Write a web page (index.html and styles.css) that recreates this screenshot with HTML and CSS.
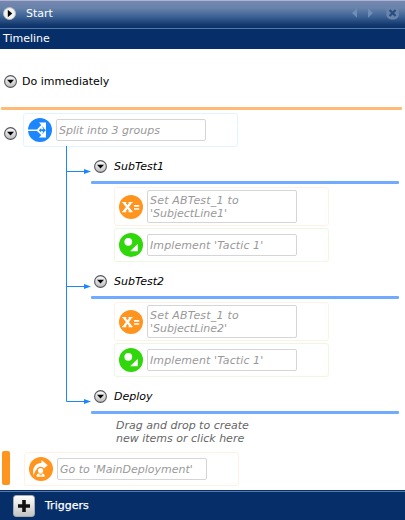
FILE: index.html
```html
<!DOCTYPE html>
<html lang="en">
<head>
<meta charset="utf-8">
<title>Start</title>
<link rel="stylesheet" href="styles.css">
</head>
<body>
<svg class="defs" width="0" height="0">
  <defs>
    <linearGradient id="metal" x1="0" y1="0" x2="0" y2="1"><stop offset="0" stop-color="#fff"/><stop offset="1" stop-color="#bbb"/></linearGradient>
    <symbol id="caret" viewBox="0 0 13 13"><circle cx="6.5" cy="6.5" r="5.9" fill="url(#metal)" stroke="#55555c" stroke-width="1.1"/><path d="M3 4.8h7L6.5 8.6z" fill="#000"/></symbol>
    <symbol id="split" viewBox="0 0 24 24"><circle cx="12" cy="12" r="12" fill="#1c86ff"/><path d="M11 4.5h7v15h-7l2.2-2.4L9 13H0v-1.6h9l4.2-4.3z" fill="#fff"/><path d="M10.8 12.2l2.4-2.3v1.6h1l1.4-1.6 2.3 2.3-2.3 2.3-1.4-1.6h-1v1.6z" fill="#1c86ff"/><path d="M13.8 9.2l.9-.9 1.4 1.4-.6.6zM13.8 15.2l.9.9 1.4-1.4-.6-.6z" fill="#1c86ff" opacity=".6"/></symbol>
    <symbol id="assign" viewBox="0 0 24 24"><circle cx="12" cy="12" r="12" fill="#ff951e"/><path d="M5 7.7l7 8.8M11.7 7.7L5 16.5" stroke="#fff" stroke-width="2.3"/><path d="M3.2 7.5h4M9.6 7.5h4M3.2 16.7h4M9.6 16.7h4" stroke="#fff" stroke-width="1.2"/><path d="M15 10.8h5.2M15 14h5.2" stroke="#fff" stroke-width="1.7"/></symbol>
    <symbol id="tactic" viewBox="0 0 24 24"><circle cx="12" cy="12" r="12" fill="#2fd70b"/><circle cx="9.3" cy="8.8" r="3.9" fill="#fff"/><path d="M18.8 10.8v7.5h-7.7z" fill="#fff"/></symbol>
    <symbol id="goto" viewBox="0 0 24 24"><circle cx="12" cy="12" r="12" fill="#ff951e"/><path d="M4.7 18.5C2.6 11.4 6.2 6.3 12.5 5.8V3l6.3 5.3-6.3 5.1v-3C8.8 10.3 6 12.6 4.7 18.5z" fill="#fff"/><circle cx="11.6" cy="13.6" r="3.2" fill="#fff" stroke="#ff951e" stroke-width="1.1"/><path d="M7.7 19.8v-1.5q0-1.9 2-1.9h3.8q2 0 2 1.9v1.5z" fill="#fff"/><path d="M10.4 17.8h2.8" stroke="#ff951e"/></symbol>
  </defs>
</svg>
<header class="titlebar">
  <svg class="caret" viewBox="0 0 13 13"><circle cx="6.5" cy="6.5" r="6" fill="#f2f2ef" stroke="#b4b8bd"/><path d="M4.8 2.8v7.4l4.4-3.7z" fill="#000"/></svg>
  <span class="title">Start</span>
  <svg class="controls" width="48" height="14" viewBox="0 0 48 14"><path d="M5 2.3v9.4L0 7z" fill="#6f8db5"/><path d="M16 2.3v9.4L21 7z" fill="#6f8db5"/><rect x="34.3" y=".3" width="12.6" height="13.2" rx="5" fill="#6a83ab"/><path d="M37.6 4l6 6M43.6 4l-6 6" stroke="#294d80" stroke-width="2.2"/></svg>
</header>
<div class="section-title">Timeline</div>
<main class="timeline">
  <div class="phase"><svg class="caret"><use href="#caret"/></svg><span>Do immediately</span></div>
  <div class="rule orange-rule"></div>
  <div class="split-row"><svg class="caret"><use href="#caret"/></svg>
    <div class="card blue"><svg class="icon"><use href="#split"/></svg><div class="field">Split into 3 groups</div></div>
  </div>
  <div class="tree">
    <svg class="connector" width="27" height="260" viewBox="0 0 27 260"><path d="M1.5 0v255.5H20M1.5 25.5H20M1.5 140.5H20" fill="none" stroke="#1c86ff"/><path d="M19 23l7 2.5-7 2.5zM19 138l7 2.5-7 2.5zM19 253l7 2.5-7 2.5z" fill="#1c86ff"/></svg>
    <div class="branches">
      <section class="branch">
        <div class="branch-title"><svg class="caret"><use href="#caret"/></svg><span>SubTest1</span></div>
        <div class="rule"></div>
        <div class="card tall orange"><svg class="icon"><use href="#assign"/></svg><div class="field"><span class="wide">Set ABTest_1 to</span><br>'SubjectLine1'</div></div>
        <div class="card green"><svg class="icon"><use href="#tactic"/></svg><div class="field medium">Implement 'Tactic 1'</div></div>
      </section>
      <section class="branch">
        <div class="branch-title"><svg class="caret"><use href="#caret"/></svg><span>SubTest2</span></div>
        <div class="rule"></div>
        <div class="card tall orange"><svg class="icon"><use href="#assign"/></svg><div class="field"><span class="wide">Set ABTest_1 to</span><br>'SubjectLine2'</div></div>
        <div class="card green"><svg class="icon"><use href="#tactic"/></svg><div class="field medium">Implement 'Tactic 1'</div></div>
      </section>
      <section class="branch last">
        <div class="branch-title"><svg class="caret"><use href="#caret"/></svg><span>Deploy</span></div>
        <div class="rule"></div>
        <p class="hint">Drag and drop to create<br>new items or click here</p>
      </section>
    </div>
  </div>
  <div class="goto-row"><div class="marker"></div>
    <div class="card orange"><svg class="icon"><use href="#goto"/></svg><div class="field">Go to 'MainDeployment'</div></div>
  </div>
</main>
<footer class="triggers">
  <div class="add"><svg width="12" height="12" viewBox="0 0 12 12"><path d="M6 0v12M0 6h12" stroke="#111" stroke-width="3.6"/></svg></div>
  <span>Triggers</span>
</footer>
</body>
</html>
```
FILE: styles.css
```css
* { box-sizing: border-box; }
body { margin: 0; width: 405px; height: 520px; overflow: hidden; background: #fff; color: #000; font: 11px/13px Verdana, "DejaVu Sans", sans-serif; display: flex; flex-direction: column; }
.defs { position: absolute; }
svg { display: block; flex: none; }
.caret { width: 13px; height: 13px; }
.titlebar { height: 29px; flex: none; display: flex; align-items: center; padding: 0 6px 2px 3px; background: linear-gradient(#aab3cf 0 1px, #7687b0 1px, #6682aa 30%, #3c6195 60%, #14396e 88%, #0a316c); border-bottom: 1px solid #567ba5; color: #fff; }
.title { margin-left: 10px; }
.controls { margin-left: auto; margin-right: -1px; }
.section-title { height: 20px; flex: none; background: #062f6a; color: #fff; padding: 3px 3px 0; }
.timeline { height: 441px; flex: none; display: flex; flex-direction: column; }
.phase { margin-top: 26px; height: 13px; padding-left: 4px; display: flex; align-items: center; gap: 5px; }
.rule { height: 3px; border-radius: 1px; background: #70abff; }
.orange-rule { flex: none; margin: 19px 3px 0 1px; background: #ffba75; }
.split-row { margin-top: 3px; padding-left: 4px; display: flex; gap: 6px; align-items: flex-start; }
.split-row > .caret { margin-top: 14px; }
.card { width: 215px; height: 34px; display: flex; align-items: center; padding-left: 4px; gap: 4px; border: 1px solid; border-radius: 3px; }
.card.blue { border-color: #e2f4ff; }
.card.orange { border-color: #fff2e4; }
.card.green { border-color: #ebf8e2; }
.icon { width: 24px; height: 24px; }
.field { width: 150px; height: 22px; border: 1px solid #d5d5d5; border-radius: 2px; color: #999; font-style: italic; padding: 4px 2px; white-space: nowrap; }
.medium { letter-spacing: .1px; }
.wide { letter-spacing: .2px; }
.tall { height: 39px; }
.tall .field { height: 33px; padding-top: 3px; }
.tree { display: flex; padding-left: 65px; height: 304px; margin-top: -1px; }
.branches { width: 308px; margin-left: -1px; padding-top: 14px; }
.branch { height: 115px; }
.branch-title { height: 13px; padding-left: 3px; display: flex; align-items: center; gap: 7px; font-style: italic; }
.branch .rule { margin-top: 8px; }
.branch .card { margin-left: 23px; }
.branch .rule + .card { margin-top: 3px; }
.card + .card { margin-top: 2px; }
.hint { margin: 5px 0 0 25px; color: #666; font-style: italic; }
.goto-row { display: flex; padding-left: 2px; gap: 14px; margin-top: 1px; }
.marker { width: 8px; height: 34px; border-radius: 2px; background: #ff951e; }
.goto-row .card { margin-top: 1px; }
.triggers { height: 30px; flex: none; background: #062f6a; border-top: 1px solid #062f6a; box-shadow: inset 0 1px #567ba5; color: #fff; display: flex; align-items: center; padding-left: 13px; gap: 10px; -webkit-text-stroke: .25px #fff; }
.add { width: 22px; height: 22px; margin-top: 1px; border: 1px solid #aaa; border-radius: 3px; background: linear-gradient(#fff, #c4c4c4); display: flex; align-items: center; justify-content: center; }
```
